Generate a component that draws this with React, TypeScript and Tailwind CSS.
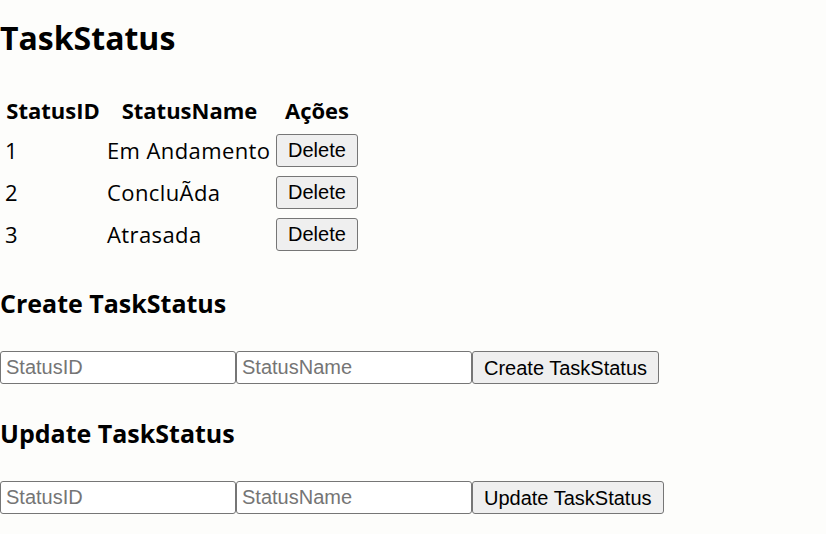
import React from "react";

type Status = { id: number; name: string };

const STATUSES: Status[] = [
  { id: 1, name: "Em Andamento" },
  { id: 2, name: "ConcluÃda" },
  { id: 3, name: "Atrasada" },
];

const inputCls =
  "w-[236px] h-[33px] border border-[#767676] rounded-[3px] bg-white px-[5px] text-[20px] font-['Liberation_Sans',Arial,sans-serif] text-black placeholder:text-[#757575] outline-none";

const buttonCls =
  "h-[33px] border border-[#767676] rounded-[3px] bg-[#efefef] px-[11px] text-[20px] tracking-normal font-['Liberation_Sans',Arial,sans-serif] text-black";

function StatusForm({ title, action, first }: { title: string; action: string; first?: boolean }) {
  return (
    <section>
      <h2 className={first ? "text-[25px] font-bold leading-[30px] mt-[32px]" : "text-[25px] font-bold leading-[30px] mt-[34px]"}>
        {title}
      </h2>
      <div className="flex mt-[33px]">
        <input className={inputCls} placeholder="StatusID" />
        <input className={inputCls} placeholder="StatusName" />
        <button type="button" className={buttonCls}>
          {action}
        </button>
      </div>
    </section>
  );
}

export default function App() {
  return (
    <div className="min-h-screen bg-[#fdfdfb] text-black font-['Open_Sans','Noto_Sans',sans-serif]">
      <h1 className="text-[32px] font-bold leading-[38px] pt-[19px]">TaskStatus</h1>

      <table className="mt-[32px] border-separate border-spacing-[2px] text-[22px] leading-[30px]">
        <thead>
          <tr className="h-[37px]">
            <th className="w-[102px] font-bold">StatusID</th>
            <th className="w-[167px] font-bold">StatusName</th>
            <th className="w-[84px] font-bold">Ações</th>
          </tr>
        </thead>
        <tbody>
          {STATUSES.map((s) => (
            <tr key={s.id} className="h-[40px]">
              <td className="px-[3px]">{s.id}</td>
              <td className="px-[1px] tracking-[0.4px]">{s.name}</td>
              <td className="px-[1px]">
                <button type="button" className={buttonCls}>
                  Delete
                </button>
              </td>
            </tr>
          ))}
        </tbody>
      </table>

      <StatusForm title="Create TaskStatus" action="Create TaskStatus" first />
      <StatusForm title="Update TaskStatus" action="Update TaskStatus" />
    </div>
  );
}
